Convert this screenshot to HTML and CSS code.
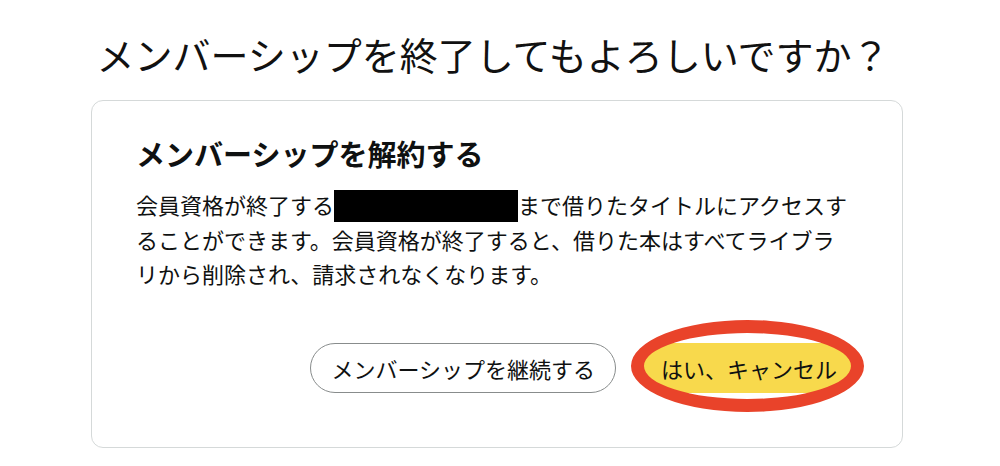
FILE: index.html
```html
<!DOCTYPE html>
<html lang="ja">
<head>
    <meta charset="utf-8">
    <title>メンバーシップを終了</title>
    <link rel="stylesheet" href="styles.css">
</head>
<body>
    <div class="page">
        <h1 class="page-title">メンバーシップを終了してもよろしいですか？</h1>

        <div class="cancel-card">
            <h2 class="card-title">メンバーシップを解約する</h2>
            <p class="card-text">会員資格が終了する<span class="redacted"></span>まで借りたタイトルにアクセスすることができます。会員資格が終了すると、借りた本はすべてライブラリから削除され、請求されなくなります。</p>

            <div class="actions">
                <button class="btn btn-keep">メンバーシップを継続する</button>
                <button class="btn btn-cancel">はい、キャンセル</button>
            </div>
        </div>
    </div>
</body>
</html>
```

FILE: styles.css
```css
body {
    margin: 0;
    padding: 0;
    background-color: white;
    color: #0f1111;
    font-family: "Noto Sans CJK JP", sans-serif;
}

.page {
    width: 812px;
    margin-left: 91px;
    padding-top: 31px;
}

.page-title {
    margin: 0 0 23px 0;
    padding-right: 8px;
    font-size: 38px;
    font-weight: 400;
    line-height: 46px;
    text-align: center;
    color: #111;
}

.cancel-card {
    border: 1px solid #d5d9d9;
    border-radius: 12px;
    padding: 34px 44px 54px 44px;
}

.card-title {
    margin: 0;
    font-size: 29px;
    font-weight: 700;
    line-height: 36px;
}

.card-text {
    margin: 16px 8px 0 0;
    font-size: 22px;
    line-height: 34px;
}

.redacted {
    display: inline-block;
    width: 184px;
    height: 32px;
    background-color: black;
    vertical-align: -8px;
}

.actions {
    display: flex;
    justify-content: flex-end;
    gap: 24px;
    margin-top: 53px;
}

.btn {
    height: 50px;
    padding: 0 20px;
    border-radius: 25px;
    font-family: inherit;
    font-size: 22px;
    color: #0f1111;
    cursor: pointer;
}

.btn-keep {
    background-color: white;
    border: 1px solid #888c8c;
}

.btn-cancel {
    position: relative;
    background-color: #f8d94c;
    border: 1px solid #f8d94c;
}

/* red marker ring drawn over the confirm button */
.btn-cancel::after {
    content: "";
    position: absolute;
    left: -10px;
    right: -7px;
    top: -24px;
    bottom: -20px;
    border: 13px solid #e9432a;
    border-radius: 50%;
}
```
